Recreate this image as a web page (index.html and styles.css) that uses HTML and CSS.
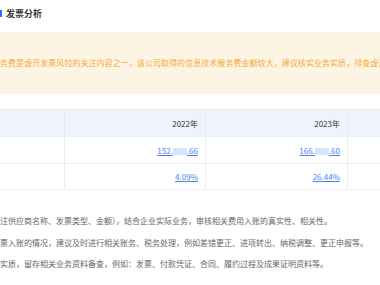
FILE: index.html
```html
<!DOCTYPE html>
<html lang="zh-CN">

<head>
  <meta charset="UTF-8">
  <meta name="viewport" content="width=device-width, initial-scale=1.0">
  <title>发票分析</title>
  <link rel="stylesheet" href="styles.css">
</head>

<body>
  <div class="panel">
    <div class="title">
      <span class="title-bar"></span>
      <span>发票分析</span>
    </div>

    <div class="notice">
      <span class="notice-text">务费是虚开发票风险的关注内容之一，该公司取得的信息技术服务费金额较大，建议核实业务实质，排查虚开发</span>
    </div>

    <!-- 年度对比表 -->
    <div class="data-table">
      <div class="row head">
        <div class="cell label"></div>
        <div class="cell">2022年</div>
        <div class="cell">2023年</div>
        <div class="cell"></div>
      </div>
      <div class="row">
        <div class="cell label"></div>
        <div class="cell"><a class="num" href="#">152.<span class="mask"></span>.66</a></div>
        <div class="cell"><a class="num" href="#">166.<span class="mask"></span>.60</a></div>
        <div class="cell"></div>
      </div>
      <div class="row">
        <div class="cell label"></div>
        <div class="cell"><a class="num" href="#">4.09%</a></div>
        <div class="cell"><a class="num" href="#">26.44%</a></div>
        <div class="cell"></div>
      </div>
    </div>

    <div class="advice">
      <p>注供应商名称、发票类型、金额），结合企业实际业务，审核相关费用入账的真实性、相关性。</p>
      <p>票入账的情况，建议及时进行相关账务、税务处理，例如差错更正、进项转出、纳税调整、更正申报等。</p>
      <p>实质，留存相关业务资料备查，例如：发票、付款凭证、合同、履约过程及成果证明资料等。</p>
    </div>
  </div>
</body>

</html>
```

FILE: styles.css
```css
* {
  margin: 0;
  padding: 0;
  box-sizing: border-box;
}

body {
  font-family: "Noto Sans CJK SC", "Noto Sans", sans-serif;
  background: #fff;
  overflow: hidden;
}

.panel {
  width: 380px;
  overflow: hidden;
}

.title {
  display: flex;
  align-items: center;
  gap: 4px;
  height: 32px;
  padding-bottom: 6px;
  font-size: 9px;
  font-weight: bold;
  color: #333;
}

.title-bar {
  width: 2px;
  height: 7px;
  background: #2f6bff;
}

.notice {
  height: 62px;
  display: flex;
  align-items: center;
  background: #fdf5e4;
  color: #f8a73a;
  font-size: 8px;
  white-space: nowrap;
  padding-bottom: 2px;
}

.notice-text {
  letter-spacing: 0.05px;
}

.data-table {
  margin-top: 15px;
  width: 420px;
  font-size: 8px;
  color: #333;
}

.row {
  display: grid;
  grid-template-columns: 65px 141px 142px 72px;
  height: 27px;
  border-top: 1px solid #ebeef3;
}

.row:last-child {
  border-bottom: 1px solid #ebeef3;
}

.row.head {
  background: #eef3fd;
}

.cell {
  display: flex;
  align-items: center;
  justify-content: flex-end;
  padding-right: 7px;
  border-right: 1px solid #e8ebf0;
}

.num {
  color: #4a80f0;
  text-decoration: underline;
}

.mask {
  display: inline-block;
  width: 14px;
  height: 7px;
  background: #d6e4fc;
  vertical-align: -1px;
}

.advice {
  margin-top: 20px;
  font-size: 8px;
  color: #666;
  white-space: nowrap;
}

.advice p {
  height: 21.5px;
  line-height: 21.5px;
}
```
